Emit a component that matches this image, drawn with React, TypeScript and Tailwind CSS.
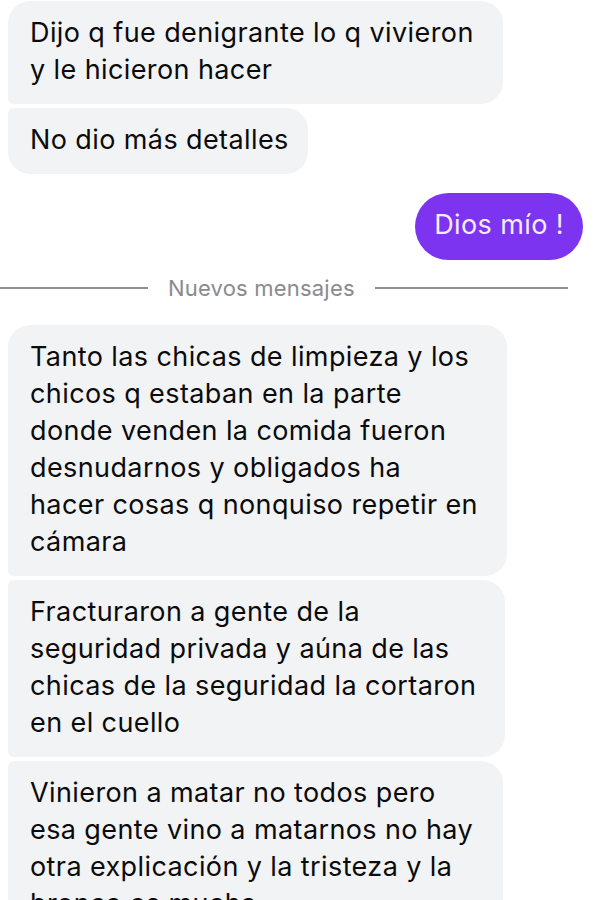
import clsx from 'clsx';

type Bubble = { lines: string[]; width: string; corners: string };

const before: Bubble[] = [
  { lines: ['Dijo q fue denigrante lo q vivieron', 'y le hicieron hacer'], width: 'w-[495px]', corners: 'rounded-[22px] rounded-bl-[6px]' },
  { lines: ['No dio más detalles'], width: 'w-[300px]', corners: 'rounded-[22px] rounded-tl-[6px]' },
];

const after: Bubble[] = [
  {
    lines: ['Tanto las chicas de limpieza y los', 'chicos q estaban en la parte', 'donde venden la comida fueron', 'desnudarnos y obligados ha', 'hacer cosas q nonquiso repetir en', 'cámara'],
    width: 'w-[499px]',
    corners: 'rounded-[22px] rounded-bl-[6px]',
  },
  {
    lines: ['Fracturaron a gente de la', 'seguridad privada y aúna de las', 'chicas de la seguridad la cortaron', 'en el cuello'],
    width: 'w-[497px]',
    corners: 'rounded-[22px] rounded-tl-[6px] rounded-bl-[6px]',
  },
  {
    lines: ['Vinieron a matar no todos pero', 'esa gente vino a matarnos no hay', 'otra explicación y la tristeza y la', 'bronca es mucha'],
    width: 'w-[495px]',
    corners: 'rounded-[22px] rounded-tl-[6px] rounded-bl-[6px]',
  },
];

const Received = ({ msg }: { msg: Bubble }) => (
  <div className={clsx('bg-[#f2f3f5] pl-[22px] pr-4 pt-[13px] pb-4 text-[27px] leading-[37px] tracking-[0.4px] text-[#0b0b0c]', msg.width, msg.corners)}>
    {msg.lines.map(line => (
      <div key={line} className="whitespace-nowrap">
        {line}
      </div>
    ))}
  </div>
);

export default function App() {
  return (
    <div className="w-[600px] h-[900px] overflow-hidden bg-white font-['Inter',sans-serif]">
      <div className="flex flex-col gap-1 pl-2 pt-[1px]">
        {before.map(m => (
          <Received key={m.lines[0]} msg={m} />
        ))}
      </div>

      <div className="flex justify-end pr-[17px] mt-[19px]">
        <div className="bg-[#7c34f1] text-[#f6ecff] rounded-full px-[19px] pt-[13px] pb-[17px] text-[27px] leading-[37px] tracking-[0.4px]">Dios mío !</div>
      </div>

      <div className="flex items-center gap-[20px] pr-8 mt-[14px] mb-[23px] h-7">
        <div className="w-[148px] h-[1.5px] bg-[#8f8f93]" />
        <span className="text-[22px] tracking-[0.2px] text-[#8a8a8e]">Nuevos mensajes</span>
        <div className="flex-1 h-[1.5px] bg-[#8f8f93]" />
      </div>

      <div className="flex flex-col gap-1 pl-2">
        {after.map(m => (
          <Received key={m.lines[0]} msg={m} />
        ))}
      </div>
    </div>
  );
}
